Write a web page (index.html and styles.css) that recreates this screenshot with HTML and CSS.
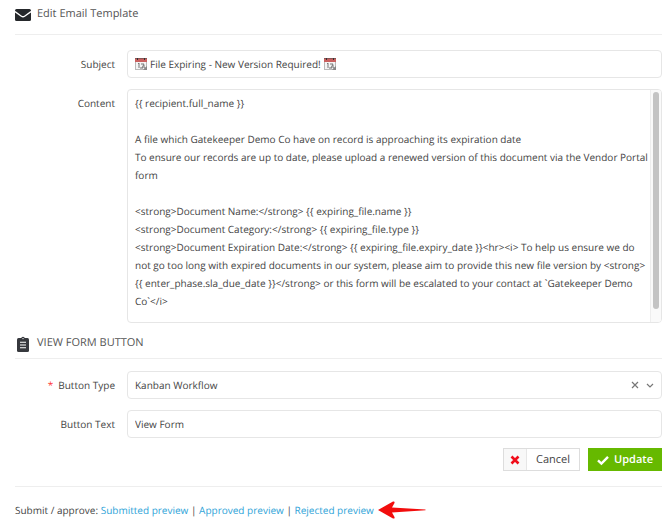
FILE: index.html
```
<!DOCTYPE html>
<html lang="en">
  <head>
    <meta charset="UTF-8" />
    <meta name="viewport" content="width=device-width, initial-scale=1.0" />
    <title>Edit Email Template</title>
    <link rel="stylesheet" href="styles.css" />
  </head>
  <body>
    <!-- Shared icons -->
    <svg class="sprite" aria-hidden="true">
      <symbol id="calendar" viewBox="0 0 12 12">
        <path d="M0 0h12v12H0z" fill="#b9b9b9" />
        <path d="M1 4h10v7H1z" fill="#f4f4f4" />
        <path d="M0 0h12v4H0z" fill="#c9605f" />
        <path d="M0 0h12v1H0z" fill="#855" />
        <path d="M2 0h1v2H2zM9 0h1v2H9z" fill="#333" />
        <path d="M3 6l1-1v5M6 6h3L7 10M9 7v3h2M5 10h3" fill="none" stroke="#777" stroke-width="1" />
        <path d="M8 12l4-4v4z" fill="#888" />
      </symbol>
    </svg>

    <form class="template-form">
      <h1 class="section-title">
        <svg class="title-icon" viewBox="0 0 16 16" aria-hidden="true">
          <rect x="0" y="2" width="16" height="12" rx="1.5" fill="#25282b" />
          <path d="M0 4.6l6.4 4.6q1.6 1.1 3.2 0L16 4.6" fill="none" stroke="#fff" stroke-width="1.3" />
        </svg>
        Edit Email Template
      </h1>

      <div class="fields">
        <label for="subject">Subject</label>
        <div class="control subject-control">
          <svg class="emoji"><use href="#calendar" /></svg>
          <input type="text" id="subject" value="File Expiring - New Version Required!" />
          <svg class="emoji"><use href="#calendar" /></svg>
        </div>

        <label for="content">Content</label>
        <div class="control content-control">
          <textarea id="content" rows="12" spellcheck="false">
{{ recipient.full_name }}

A file which Gatekeeper Demo Co have on record is approaching its expiration date
To ensure our records are up to date, please upload a renewed version of this document via the Vendor Portal form

&lt;strong&gt;Document Name:&lt;/strong&gt; {{ expiring_file.name }}
&lt;strong&gt;Document Category:&lt;/strong&gt; {{ expiring_file.type }}
&lt;strong&gt;Document Expiration Date:&lt;/strong&gt; {{ expiring_file.expiry_date }}&lt;hr&gt;&lt;i&gt; To help us ensure we do not go too long with expired documents in our system, please aim to provide this new file version by &lt;strong&gt;{{ enter_phase.sla_due_date }}&lt;/strong&gt; or this form will be escalated to your contact at `Gatekeeper Demo Co`&lt;/i&gt;
</textarea>
          <div class="scroll-track"><div class="scroll-thumb"></div></div>
        </div>
      </div>

      <h2 class="section-title form-title">
        <svg class="title-icon" viewBox="0 0 16 16" aria-hidden="true">
          <rect x="2" y="2" width="12" height="14" rx="1.5" fill="#36383d" />
          <path d="M5 2.5h1.2a1.8 1.8 0 0 1 3.6 0H11v2H5z" fill="#36383d" />
          <circle cx="8" cy="2.6" r="0.7" fill="#fff" />
          <path d="M5 6.2h6M5 9h6M5 11.8h6" stroke="#fff" stroke-width="1.1" />
        </svg>
        VIEW FORM BUTTON
      </h2>

      <div class="fields">
        <label for="button-type"><span class="required">*</span>Button Type</label>
        <div class="control select-control">
          <select id="button-type">
            <option>Kanban Workflow</option>
          </select>
          <button type="button" class="clear" aria-label="Clear">
            <svg viewBox="0 0 8 8"><path d="M1 1l6 6M7 1L1 7" /></svg>
          </button>
          <svg class="chevron" viewBox="0 0 8 8" aria-hidden="true"><path d="M1 3l3 3 3-3" /></svg>
        </div>

        <label for="button-text">Button Text</label>
        <input class="control" type="text" id="button-text" value="View Form" />
      </div>

      <div class="actions">
        <button type="button" class="btn btn-cancel">
          <span class="cross">
            <svg viewBox="0 0 10 10"><path d="M1.5 1.5l7 7M8.5 1.5l-7 7" /></svg>
          </span>
          <span class="btn-text">Cancel</span>
        </button>
        <button type="submit" class="btn btn-update">
          <svg viewBox="0 0 12 12"><path d="M1 6.4l3.4 3.2L11 2.8" /></svg>
          Update
        </button>
      </div>
    </form>

    <footer class="previews">
      <span>Submit / approve: <a href="#submitted">Submitted preview</a> | <a href="#approved">Approved preview</a> | <a href="#rejected">Rejected preview</a></span>
      <svg class="pointer" viewBox="0 0 48 18" aria-hidden="true">
        <path d="M0 9L15 0.5Q17 0 16.5 2L14 6.5L47.5 8.5V9.3L14 11.5L16.5 16Q17 18 15 17.5Z" fill="#f20d0d" />
      </svg>
    </footer>
  </body>
</html>
```
FILE: styles.css
```
* {
  box-sizing: border-box;
}

body {
  margin: 0;
  padding: 5px 8px 0 15px;
  background: #fff;
  color: #444;
  font-family: "Open Sans", "Noto Sans", sans-serif;
  font-size: 10px;
  line-height: 18px;
  text-rendering: geometricPrecision;
}

input,
select,
textarea,
button {
  margin: 0;
  font: inherit;
  color: inherit;
  text-rendering: inherit;
}

.sprite {
  display: none;
}

.section-title {
  display: flex;
  gap: 6px;
  margin: 0;
  padding-bottom: 11px;
  border-bottom: 1px solid #eee;
  font-size: 11px;
  font-weight: 400;
  line-height: 18px;
  color: #555;
}

.title-icon {
  width: 16px;
  height: 16px;
  margin-top: 2px;
}

.form-title {
  margin-top: 11px;
  padding-bottom: 6px;
}

.fields {
  display: grid;
  grid-template-columns: 100px 1fr;
  gap: 11px 12px;
  padding-top: 15px;
}

.form-title + .fields {
  padding-top: 12px;
}

.fields label {
  padding-top: 5px;
  text-align: right;
}

.required {
  margin-right: 5px;
  color: #f33;
}

.control {
  width: 100%;
  min-height: 28px;
  padding: 0 7px;
  border: 1px solid #e6e6e6;
  border-radius: 4px;
  background: #fff;
  outline: none;
}

.content-control {
  display: flex;
  padding: 0;
  overflow: hidden;
}

.content-control textarea {
  flex: 1;
  height: 232px;
  padding: 4px 1px 4px 7px;
  border: 0;
  background: none;
  outline: none;
  overflow: hidden;
  resize: none;
}

.scroll-track {
  width: 11px;
  padding: 2px;
  border-left: 1px solid #eee;
  background: #fafafa;
}

.scroll-thumb {
  width: 6px;
  height: 95%;
  border-radius: 3px;
  background: #c4c4c4;
}

.subject-control,
.select-control {
  display: flex;
  align-items: center;
}

.subject-control {
  gap: 3px;
}

.subject-control input {
  field-sizing: content;
  padding: 0;
  border: 0;
  outline: none;
}

.emoji {
  flex: none;
  width: 12px;
  height: 12px;
}

.select-control select {
  flex: 1;
  appearance: none;
  padding: 0;
  border: 0;
  background: none;
  outline: none;
}

.clear {
  display: flex;
  margin-right: 7px;
  padding: 0;
  border: 0;
  background: none;
}

.clear svg,
.chevron {
  width: 8px;
  height: 8px;
  fill: none;
  stroke: #777;
  stroke-width: 1.2;
}

.actions {
  display: flex;
  justify-content: flex-end;
  gap: 8px;
  padding: 10px 0 15px;
  border-bottom: 1px solid #eee;
}

.btn {
  display: flex;
  align-items: center;
  height: 23px;
  padding: 0;
  font-size: 11px;
  cursor: pointer;
}

.btn svg {
  fill: none;
}

.btn-cancel {
  border: 1px solid #ddd;
  background: #fff;
}

.cross {
  display: flex;
  align-items: center;
  height: 100%;
  padding: 0 6px;
  border-right: 1px solid #e6e6e6;
  background: #f8f8f8;
}

.cross svg {
  width: 10px;
  height: 10px;
  stroke: #f00d1a;
  stroke-width: 2.6;
}

.btn-text {
  padding: 0 9px;
}

.btn-update {
  gap: 5px;
  padding: 0 9px;
  border: 0;
  background: #66b900;
  color: #fff;
  font-weight: 600;
}

.btn-update svg {
  width: 12px;
  height: 12px;
  stroke: #fff;
  stroke-width: 2.4;
}

.previews {
  display: flex;
  align-items: center;
  gap: 4px;
  padding-top: 14px;
}

.previews a {
  color: #2ea3d8;
  text-decoration: none;
}

.pointer {
  width: 48px;
  height: 18px;
}
```
